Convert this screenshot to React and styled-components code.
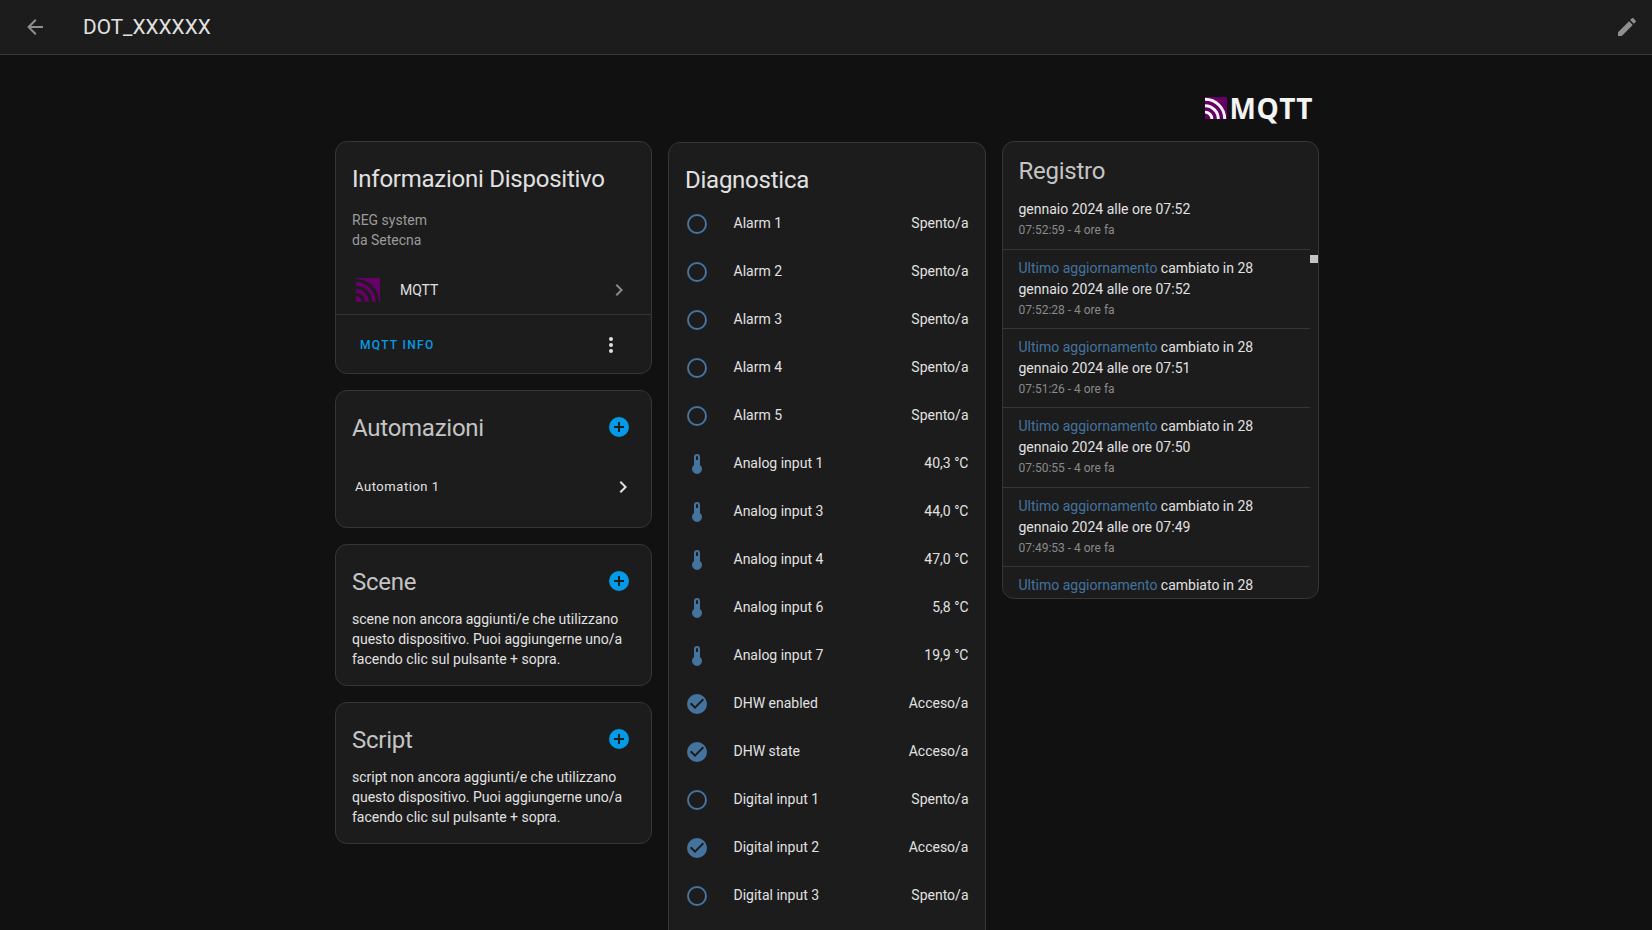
import React from "react";
import styled, { createGlobalStyle } from "styled-components";

const GlobalStyle = createGlobalStyle`
  html, body {
    margin: 0;
    height: 100%;
    overflow: hidden;
    background: #111111;
  }
  body {
    font-family: Roboto, "Liberation Sans", sans-serif;
    color: #e1e1e1;
    font-size: 14px;
  }
`;

const MDI = {
  back: "M20,11V13H8L13.5,18.5L12.08,19.92L4.16,12L12.08,4.08L13.5,5.5L8,11H20Z",
  pencil:
    "M20.71,7.04C21.1,6.65 21.1,6 20.71,5.63L18.37,3.29C18,2.9 17.35,2.9 16.96,3.29L15.12,5.12L18.87,8.87M3,17.25V21H6.75L17.81,9.93L14.06,6.18L3,17.25Z",
  chevron: "M8.59,16.58L13.17,12L8.59,7.41L10,6L16,12L10,18L8.59,16.58Z",
  dots: "M12,16A2,2 0 0,1 14,18A2,2 0 0,1 12,20A2,2 0 0,1 10,18A2,2 0 0,1 12,16M12,10A2,2 0 0,1 14,12A2,2 0 0,1 12,14A2,2 0 0,1 10,12A2,2 0 0,1 12,10M12,4A2,2 0 0,1 14,6A2,2 0 0,1 12,8A2,2 0 0,1 10,6A2,2 0 0,1 12,4Z",
  plus: "M17,13H13V17H11V13H7V11H11V7H13V11H17M12,2A10,10 0 0,0 2,12A10,10 0 0,0 12,22A10,10 0 0,0 22,12A10,10 0 0,0 12,2Z",
  on: "M10,17L5,12L6.41,10.58L10,14.17L17.59,6.58L19,8M12,2A10,10 0 0,0 2,12A10,10 0 0,0 12,22A10,10 0 0,0 22,12A10,10 0 0,0 12,2Z",
  off: "M12,20A8,8 0 0,1 4,12A8,8 0 0,1 12,4A8,8 0 0,1 20,12A8,8 0 0,1 12,20M12,2A10,10 0 0,0 2,12A10,10 0 0,0 12,22A10,10 0 0,0 22,12A10,10 0 0,0 12,2Z",
  temp: "M15 13V5A3 3 0 0 0 9 5V13A5 5 0 1 0 15 13M12 4A1 1 0 0 1 13 5V8H11V5A1 1 0 0 1 12 4Z",
};

const Icon = ({ d, size = 24, color = "currentColor" }) => (
  <svg width={size} height={size} viewBox="0 0 24 24" fill={color} style={{ display: "block", flexShrink: 0 }}>
    <path d={d} />
  </svg>
);

// purple square with the broadcast arcs, arcs colour differs between logo and row icon
const MqttMark = ({ size, arcs }) => (
  <svg width={size} height={size} viewBox="0 0 24 24" style={{ display: "block", flexShrink: 0 }}>
    <rect width="24" height="24" fill="#660066" />
    <g fill="none" stroke={arcs} strokeWidth="3.2">
      <path d="M0 16.5A7.5 7.5 0 0 1 7.5 24" />
      <path d="M0 9.5A14.5 14.5 0 0 1 14.5 24" />
      <path d="M0 2.5A21.5 21.5 0 0 1 21.5 24" />
    </g>
  </svg>
);

const Page = styled.div`
  height: 100vh;
  overflow: hidden;
  display: flex;
  flex-direction: column;
`;

const TopBar = styled.header`
  height: 54px;
  flex-shrink: 0;
  display: flex;
  align-items: center;
  padding: 0 13px 0 23px;
  background: #1c1c1c;
  border-bottom: 1px solid #363636;
  color: #8f8f8f;
`;

const PageTitle = styled.h1`
  flex: 1;
  margin: 0 0 0 36px;
  font-size: 20.8px;
  font-weight: 400;
  color: #e1e1e1;
`;

const Main = styled.main`
  width: 984px;
  margin: 0 333px 0 335px;
  flex: 1;
  min-height: 0;
`;

const LogoRow = styled.div`
  height: 86px;
  display: flex;
  justify-content: flex-end;
  align-items: flex-start;
  padding: 40px 6px 0 0;
  box-sizing: border-box;
`;

const LogoBrand = styled.div`
  display: flex;
  align-items: center;
  gap: 2px;
  height: 26px;
`;

const LogoText = styled.span`
  font-family: "Open Sans", sans-serif;
  font-size: 28px;
  font-weight: 700;
  line-height: 26px;
  letter-spacing: 0.6px;
  color: #f4f4f4;
`;

const Columns = styled.div`
  display: grid;
  grid-template-columns: 317px 317.5px 317px;
  gap: 16px;
  align-items: start;
`;

const Column = styled.div`
  display: flex;
  flex-direction: column;
  gap: 16px;
  padding-top: ${(p) => p.$offset || 0}px;
`;

const Card = styled.section`
  background: #1c1c1c;
  border: 1px solid #363636;
  border-radius: 12px;
  box-sizing: border-box;
  position: relative;
`;

// runs on past the bottom of the window
const DiagCard = styled(Card)`
  padding-bottom: 48px;
`;

const CardTitle = styled.h2`
  margin: 0;
  font-size: 24px;
  font-weight: 400;
  line-height: 32px;
  letter-spacing: -0.25px;
  color: ${(p) => (p.$dim ? "#c4c4c4" : "#e1e1e1")};
`;

const InfoHead = styled.div`
  padding: 21px 16px 0;
`;

const Maker = styled.div`
  margin-top: 15px;
  color: #9b9b9b;
  line-height: 20px;
`;

const DeviceRow = styled.div`
  display: flex;
  align-items: center;
  height: 48px;
  margin-top: 16px;
  padding: 0 20px;
  gap: 20px;
  color: #e1e1e1;
`;

const DeviceName = styled.span`
  flex: 1;
`;

const Muted = styled.span`
  color: #8a8a8a;
`;

const Actions = styled.div`
  display: flex;
  align-items: center;
  justify-content: space-between;
  height: 59px;
  box-sizing: border-box;
  padding: 1px 28px 0 24px;
  border-top: 1px solid #363636;
`;

const ActionLink = styled.span`
  font-size: 12px;
  font-weight: 500;
  letter-spacing: 1.3px;
  color: #039be5;
  margin-top: 1px;
`;

const SectionHead = styled.div`
  display: flex;
  align-items: center;
  justify-content: space-between;
  padding: 21px 20px 0 16px;
`;

const AddButton = styled.span`
  color: #039be5;
  margin-bottom: 2px;
`;

const LinkRow = styled.div`
  display: flex;
  align-items: center;
  justify-content: space-between;
  height: 48px;
  margin: 18px 0 17px;
  padding: 0 16px 0 19px;
  font-size: 13px;
  letter-spacing: 0.55px;
  color: #e1e1e1;

  svg {
    margin-top: 1px;
  }
`;

const Empty = styled.p`
  margin: 11px 16px 16px;
  line-height: 20px;
  color: #e1e1e1;
`;

const DiagTitle = styled(CardTitle)`
  padding: 21px 16px 3px;
`;

const DiagRow = styled.div`
  display: flex;
  align-items: center;
  height: 48px;
  padding: 0 16px;
`;

const DiagIcon = styled.span`
  width: 24px;
  margin-right: 24.5px;
  margin-top: 1px;
  color: #44739e;
`;

const DiagName = styled.span`
  flex: 1;
  color: #e1e1e1;
`;

const DiagValue = styled.span`
  color: #e1e1e1;
`;

const LogTitle = styled(CardTitle)`
  padding: 13px 16px 0;
`;

const LogList = styled.div`
  height: 411px;
  overflow: hidden;
  margin-right: 8px;
`;

const LogEntry = styled.div`
  padding: 8px 16px;
  border-top: 1px solid #363636;
  height: 79.2px;
  box-sizing: border-box;
`;

// the list is scrolled, so only the tail of the first entry is still in view
const LogEntryTail = styled.div`
  padding: 12px 16px 0;
  height: 62px;
  box-sizing: border-box;
`;

const LogLine = styled.div`
  line-height: 21px;
  color: #e1e1e1;
`;

const LogEntity = styled.span`
  color: #44739e;
`;

const LogTime = styled.div`
  font-size: 12px;
  line-height: 21px;
  color: #8a8a8a;
`;

const ScrollThumb = styled.div`
  position: absolute;
  right: 0;
  top: 113px;
  width: 8px;
  height: 8px;
  background: #c4c4c4;
`;

const diagnostics = [
  ["off", "Alarm 1", "Spento/a"],
  ["off", "Alarm 2", "Spento/a"],
  ["off", "Alarm 3", "Spento/a"],
  ["off", "Alarm 4", "Spento/a"],
  ["off", "Alarm 5", "Spento/a"],
  ["temp", "Analog input 1", "40,3 °C"],
  ["temp", "Analog input 3", "44,0 °C"],
  ["temp", "Analog input 4", "47,0 °C"],
  ["temp", "Analog input 6", "5,8 °C"],
  ["temp", "Analog input 7", "19,9 °C"],
  ["on", "DHW enabled", "Acceso/a"],
  ["on", "DHW state", "Acceso/a"],
  ["off", "Digital input 1", "Spento/a"],
  ["on", "Digital input 2", "Acceso/a"],
  ["off", "Digital input 3", "Spento/a"],
];

const logs = [
  ["07:52", "07:52:28 - 4 ore fa"],
  ["07:51", "07:51:26 - 4 ore fa"],
  ["07:50", "07:50:55 - 4 ore fa"],
  ["07:49", "07:49:53 - 4 ore fa"],
];

function Section({ title, children }) {
  return (
    <Card>
      <SectionHead>
        <CardTitle $dim>{title}</CardTitle>
        <AddButton>
          <Icon d={MDI.plus} />
        </AddButton>
      </SectionHead>
      {children}
    </Card>
  );
}

export default function App() {
  return (
    <Page>
      <GlobalStyle />
      <TopBar>
        <Icon d={MDI.back} />
        <PageTitle>DOT_XXXXXX</PageTitle>
        <Icon d={MDI.pencil} />
      </TopBar>
      <Main>
        <LogoRow>
          <LogoBrand>
            <MqttMark size={22} arcs="#f4f4f4" />
            <LogoText>MQTT</LogoText>
          </LogoBrand>
        </LogoRow>
        <Columns>
          <Column>
            <Card>
              <InfoHead>
                <CardTitle>Informazioni Dispositivo</CardTitle>
                <Maker>
                  REG system
                  <br />
                  da Setecna
                </Maker>
              </InfoHead>
              <DeviceRow>
                <MqttMark size={24} arcs="#1c1c1c" />
                <DeviceName>MQTT</DeviceName>
                <Muted>
                  <Icon d={MDI.chevron} />
                </Muted>
              </DeviceRow>
              <Actions>
                <ActionLink>MQTT INFO</ActionLink>
                <Icon d={MDI.dots} />
              </Actions>
            </Card>
            <Section title="Automazioni">
              <LinkRow>
                Automation 1
                <Icon d={MDI.chevron} />
              </LinkRow>
            </Section>
            <Section title="Scene">
              <Empty>
                scene non ancora aggiunti/e che utilizzano questo dispositivo. Puoi aggiungerne uno/a facendo clic sul
                pulsante + sopra.
              </Empty>
            </Section>
            <Section title="Script">
              <Empty>
                script non ancora aggiunti/e che utilizzano questo dispositivo. Puoi aggiungerne uno/a facendo clic sul
                pulsante + sopra.
              </Empty>
            </Section>
          </Column>
          <Column $offset={1}>
            <DiagCard>
              <DiagTitle>Diagnostica</DiagTitle>
              {diagnostics.map(([icon, name, value]) => (
                <DiagRow key={name}>
                  <DiagIcon>
                    <Icon d={MDI[icon]} />
                  </DiagIcon>
                  <DiagName>{name}</DiagName>
                  <DiagValue>{value}</DiagValue>
                </DiagRow>
              ))}
            </DiagCard>
          </Column>
          <Column>
            <Card>
              <LogTitle $dim>Registro</LogTitle>
              <LogList>
                <LogEntryTail>
                  <LogLine>gennaio 2024 alle ore 07:52</LogLine>
                  <LogTime>07:52:59 - 4 ore fa</LogTime>
                </LogEntryTail>
                {logs.map(([hour, time]) => (
                  <LogEntry key={time}>
                    <LogLine>
                      <LogEntity>Ultimo aggiornamento</LogEntity> cambiato in 28
                    </LogLine>
                    <LogLine>gennaio 2024 alle ore {hour}</LogLine>
                    <LogTime>{time}</LogTime>
                  </LogEntry>
                ))}
                <LogEntry>
                  <LogLine>
                    <LogEntity>Ultimo aggiornamento</LogEntity> cambiato in 28
                  </LogLine>
                </LogEntry>
              </LogList>
              <ScrollThumb />
            </Card>
          </Column>
        </Columns>
      </Main>
    </Page>
  );
}
